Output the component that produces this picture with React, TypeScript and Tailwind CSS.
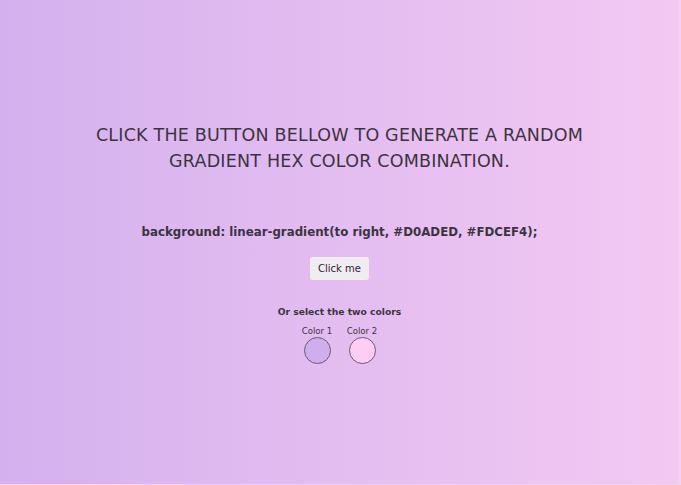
export default function App() {
  return (
    <div
      className="w-[681px] h-[485px] flex flex-col items-center text-[#3b3440] bg-[linear-gradient(to_right,#d4b1ee,#f3c9f3)] border-r-2 border-b border-[#f4d2f4]"
      style={{ fontFamily: '"DejaVu Sans", sans-serif' }}
    >
      <h1 className="mt-[122px] text-[17.5px] leading-[26px] text-center w-[540px] tracking-[0.2px]">
        CLICK THE BUTTON BELLOW TO GENERATE A RANDOM GRADIENT HEX COLOR COMBINATION.
      </h1>
      <p className="mt-[49px] text-[11.8px] font-bold leading-[18px]">
        background: linear-gradient(to right, #D0ADED, #FDCEF4);
      </p>
      <button className="mt-[16px] w-[59px] h-[23px] bg-[#efedf0] rounded-[3px] text-[10px] font-medium text-[#2d2530]">
        Click me
      </button>
      <p className="mt-[25px] text-[9.2px] font-bold leading-[14px]">Or select the two colors</p>
      <div className="mt-[6px] flex gap-[13px]">
        <div className="flex flex-col items-center w-[32px]">
          <span className="text-[8.6px] leading-[12px]">Color 1</span>
          <div className="w-[27px] h-[27px] rounded-full bg-[#D0ADED] border border-[#6a5a70]" />
        </div>
        <div className="flex flex-col items-center w-[32px]">
          <span className="text-[8.6px] leading-[12px]">Color 2</span>
          <div className="w-[27px] h-[27px] rounded-full bg-[#FDCEF4] border border-[#6a5a70]" />
        </div>
      </div>
    </div>
  );
}
